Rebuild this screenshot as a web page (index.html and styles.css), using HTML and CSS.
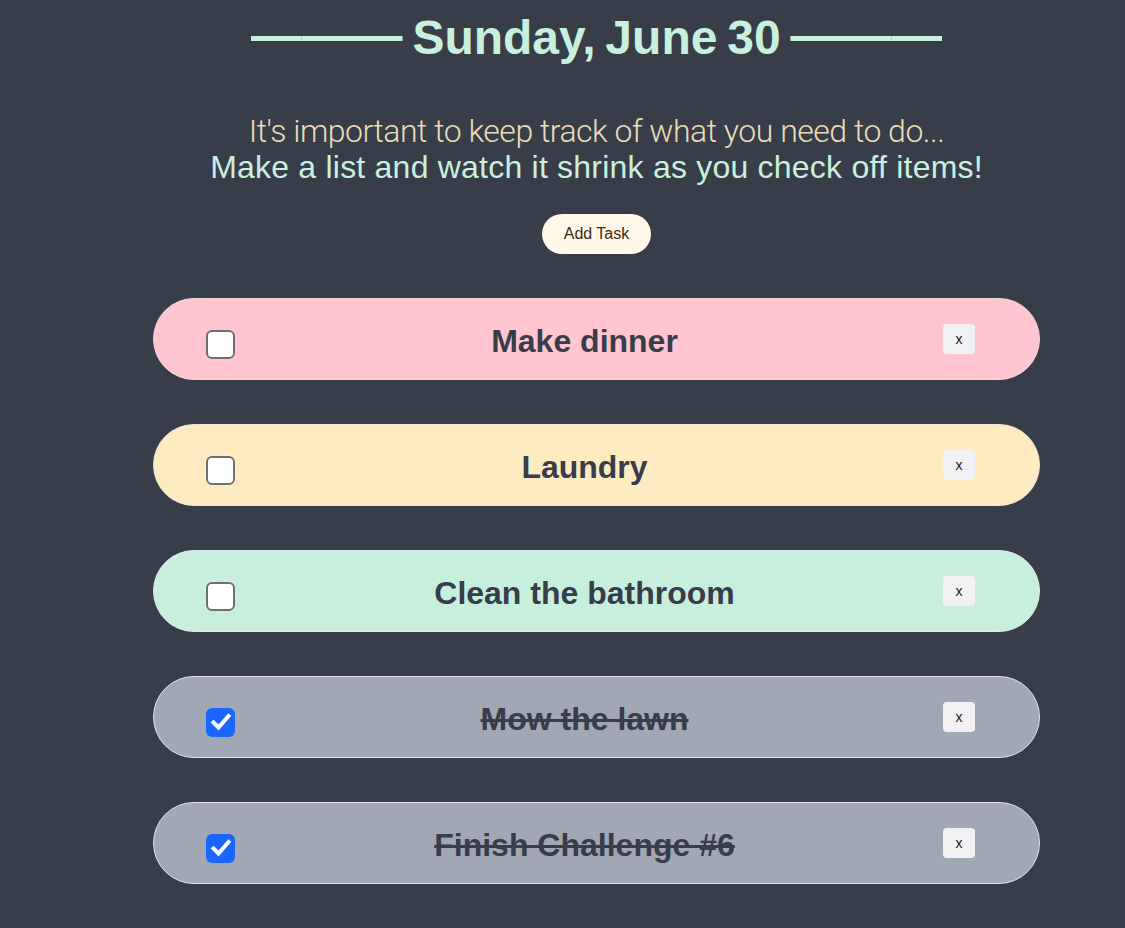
FILE: index.html
```html
<!DOCTYPE html>
<html lang="en">
<head>
<meta charset="utf-8">
<title>To-do</title>
<link rel="stylesheet" href="styles.css">
</head>
<body>
<main class="page">
  <h1 class="title"><span class="dash">———</span> Sunday, June 30 <span class="dash">———</span></h1>
  <p class="intro">
    <span class="intro-light">It's important to keep track of what you need to do...</span>
    <span class="intro-main">Make a list and watch it shrink as you check off items!</span>
  </p>
  <button class="add-btn" type="button">Add Task</button>
  <ul class="tasks">
    <li class="task task-pink">
      <span class="check"></span>
      <span class="task-text">Make dinner</span>
      <button class="del" type="button">x</button>
    </li>
    <li class="task task-yellow">
      <span class="check"></span>
      <span class="task-text">Laundry</span>
      <button class="del" type="button">x</button>
    </li>
    <li class="task task-mint">
      <span class="check"></span>
      <span class="task-text">Clean the bathroom</span>
      <button class="del" type="button">x</button>
    </li>
    <li class="task task-done">
      <span class="check checked"><svg viewBox="0 0 28 28" width="28" height="28"><path d="M6.5 14.5 L11.5 19.5 L21.5 8" fill="none" stroke="#fff" stroke-width="4" stroke-linecap="square" stroke-linejoin="miter"/></svg></span>
      <span class="task-text">Mow the lawn</span>
      <button class="del" type="button">x</button>
    </li>
    <li class="task task-done">
      <span class="check checked"><svg viewBox="0 0 28 28" width="28" height="28"><path d="M6.5 14.5 L11.5 19.5 L21.5 8" fill="none" stroke="#fff" stroke-width="4" stroke-linecap="square" stroke-linejoin="miter"/></svg></span>
      <span class="task-text">Finish Challenge #6</span>
      <button class="del" type="button">x</button>
    </li>
  </ul>
</main>
</body>
</html>
```

FILE: styles.css
```css
html, body {
  margin: 0;
  padding: 0;
}

body {
  background: #383d4a;
  font-family: "Liberation Sans", Arial, sans-serif;
  min-height: 928px;
}

.page {
  padding-left: 68px;
  display: flex;
  flex-direction: column;
  align-items: center;
}

.title {
  margin: 7px 0 0;
  font-size: 48px;
  line-height: 55px;
  font-weight: 700;
  letter-spacing: 0;
  word-spacing: -3.5px;
  color: #c8f0df;
  white-space: nowrap;
}

.dash {
  font-size: 50.5px;
  vertical-align: 2px;
}

.intro {
  margin: 48px 0 0;
  text-align: center;
  font-size: 32px;
  line-height: 36px;
}

.intro-light {
  display: block;
  font-family: Roboto, "Liberation Sans", sans-serif;
  font-weight: 300;
  letter-spacing: -0.5px;
  color: #eadcb6;
}

.intro-main {
  display: block;
  letter-spacing: 0.22px;
  color: #c8f0df;
}

.add-btn {
  margin-top: 29px;
  height: 40px;
  padding: 0 22px;
  border: none;
  border-radius: 20px;
  background: #fff8e9;
  color: #3a2d12;
  font-family: "Liberation Sans", Arial, sans-serif;
  font-size: 16px;
}

.tasks {
  list-style: none;
  margin: 44px 0 0;
  padding: 0;
  width: 887px;
  display: flex;
  flex-direction: column;
  gap: 44px;
}

.task {
  box-sizing: border-box;
  height: 82px;
  border: 1px solid #e6e6ea;
  border-radius: 41px;
  padding: 0 64px 0 52px;
  display: flex;
  align-items: center;
}

.task-pink { background: #ffc5d0; border-color: #f3d6dc; }
.task-yellow { background: #ffebc1; border-color: #f1e6d0; }
.task-mint { background: #c8efdd; border-color: #dbefe6; }
.task-done { background: #a2a7b6; border-color: #e4e5ea; }

.check {
  box-sizing: border-box;
  width: 29px;
  height: 29px;
  margin-top: 10px;
  border: 2.5px solid #707070;
  border-radius: 6px;
  background: #fff;
  flex: none;
  display: flex;
  align-items: center;
  justify-content: center;
}

.check.checked {
  border: none;
  background: #1a66ff;
}

.task-text {
  flex: 1;
  text-align: center;
  margin-right: 9px;
  padding-top: 4px;
  font-size: 32px;
  font-weight: 700;
  color: #373d4a;
  white-space: nowrap;
}

.task-done .task-text {
  text-decoration: line-through;
  text-decoration-thickness: 3px;
}

.del {
  flex: none;
  width: 32px;
  height: 30px;
  padding: 0;
  border: none;
  border-radius: 4px;
  background: #f1f1f4;
  color: #222;
  font-family: "Liberation Sans", Arial, sans-serif;
  font-size: 14px;
}
```
